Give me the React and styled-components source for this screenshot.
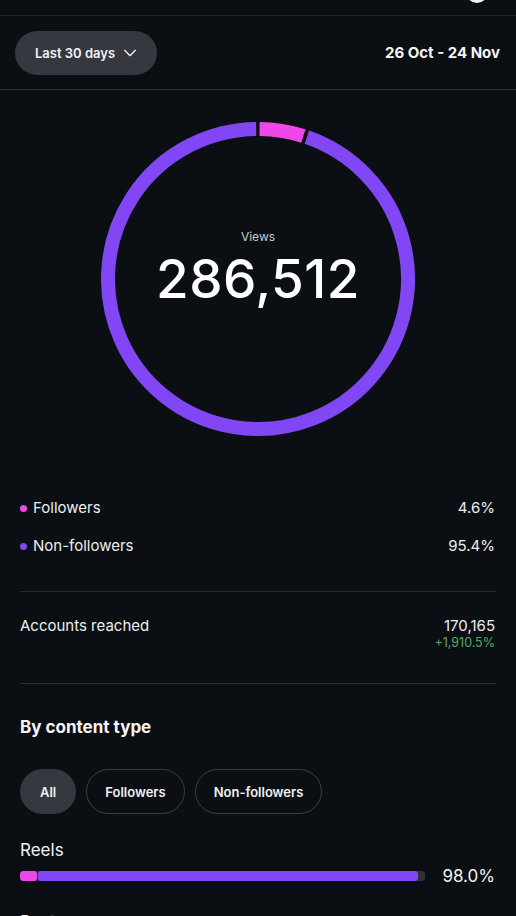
import React from 'react';
import styled, { createGlobalStyle } from 'styled-components';

const GlobalStyle = createGlobalStyle`
  html, body {
    margin: 0;
    padding: 0;
    background: #0b0e13;
  }
  body {
    font-family: Inter, "Noto Sans", "Liberation Sans", sans-serif;
    color: #f5f5f5;
    -webkit-font-smoothing: antialiased;
  }
`;

const Page = styled.div`
  width: 516px;
  height: 916px;
  overflow: hidden;
  background: #0b0e13;
`;

const TopBar = styled.div`
  height: 15px;
  border-bottom: 1px solid #23272d;
  display: flex;
  justify-content: flex-end;
  padding-right: 28px;
  overflow: hidden;
`;

const TopIcon = styled.div`
  width: 22px;
  height: 22px;
  margin-top: -19px;
  border-radius: 50%;
  background: #f2f2f2;
`;

const Header = styled.div`
  height: 73px;
  display: flex;
  align-items: center;
  justify-content: space-between;
  padding: 0 16px 0 15px;
  border-bottom: 1px solid #2a2e34;
`;

const RangeButton = styled.button`
  height: 44px;
  padding: 0 19px 0 20px;
  border: none;
  border-radius: 22px;
  background: #35383e;
  color: #f2f2f2;
  font-family: inherit;
  font-size: 13px;
  font-weight: 600;
  display: flex;
  align-items: center;
  gap: 7px;
`;

const DateRange = styled.div`
  font-size: 15px;
  font-weight: 700;
  color: #f5f5f5;
`;

const RingWrap = styled.div`
  position: relative;
  width: 320px;
  height: 320px;
  margin: 29px auto 0;
`;

const RingCenter = styled.div`
  position: absolute;
  inset: 0;
  display: flex;
  flex-direction: column;
  align-items: center;
  justify-content: center;
  padding-bottom: 23px;
`;

const RingLabel = styled.div`
  font-size: 12px;
  line-height: 15px;
  color: #c9cacc;
  margin-bottom: 8px;
`;

const RingValue = styled.div`
  font-size: 53px;
  font-weight: 500;
  letter-spacing: 0.5px;
  color: #fff;
  line-height: 54px;
`;

const Legend = styled.div`
  padding: 58px 21px 0 20px;
  display: flex;
  flex-direction: column;
  gap: 16px;
`;

const LegendRow = styled.div`
  display: flex;
  align-items: center;
  justify-content: space-between;
  font-size: 15px;
  line-height: 22px;
  color: #eeeeee;
`;

const LegendName = styled.div`
  display: flex;
  align-items: center;
  gap: 6px;
`;

const Dot = styled.span`
  width: 7px;
  height: 7px;
  border-radius: 50%;
  background: ${(p) => p.$color};
`;

const Divider = styled.div`
  height: 1px;
  background: #2a2e34;
  margin: ${(p) => p.$top || 0}px 20px 0 20px;
`;

const StatRow = styled.div`
  display: flex;
  justify-content: space-between;
  align-items: flex-start;
  padding: 24px 21px 33px 20px;
  font-size: 15px;
  color: #eeeeee;
`;

const StatValue = styled.div`
  text-align: right;
  line-height: 20px;
`;

const Change = styled.div`
  font-size: 12.5px;
  line-height: 14px;
  color: #4fae5f;
`;

const SectionTitle = styled.h2`
  margin: 33px 20px 0;
  font-size: 17px;
  font-weight: 700;
  color: #f5f5f5;
`;

const Chips = styled.div`
  display: flex;
  gap: 10px;
  padding: 32px 20px 0;
`;

const Chip = styled.button`
  height: 45px;
  padding: 0 ${(p) => (p.$active ? '19px' : '18px')};
  border-radius: 23px;
  border: 1px solid ${(p) => (p.$active ? '#35383e' : '#3a3d43')};
  background: ${(p) => (p.$active ? '#35383e' : 'transparent')};
  color: #f2f2f2;
  font-family: inherit;
  font-size: 13px;
  font-weight: 600;
`;

const TypeBlock = styled.div`
  padding: 25px 21px 0 20px;
`;

const TypeName = styled.div`
  font-size: 17px;
  color: #f2f2f2;
  line-height: 22px;
`;

const BarRow = styled.div`
  display: flex;
  align-items: center;
  justify-content: space-between;
  margin-top: 5px;
`;

const Track = styled.div`
  width: 405px;
  height: 10px;
  border-radius: 3px;
  background: #2f3237;
  display: flex;
  overflow: hidden;
`;

const Fill = styled.div`
  height: 100%;
  background: ${(p) => p.$color};
  border-radius: 3px;
  margin-right: 1px;
`;

const BarValue = styled.div`
  font-size: 17px;
  color: #f2f2f2;
`;

const Chevron = () => (
  <svg width="16" height="16" viewBox="0 0 24 24" fill="none" stroke="#f2f2f2" strokeWidth="2" strokeLinecap="round" strokeLinejoin="round">
    <path d="M4 8l8 8 8-8" />
  </svg>
);

function arc(cx, cy, r, a0, a1) {
  const rad = (a) => ((a - 90) * Math.PI) / 180;
  const x0 = cx + r * Math.cos(rad(a0));
  const y0 = cy + r * Math.sin(rad(a0));
  const x1 = cx + r * Math.cos(rad(a1));
  const y1 = cy + r * Math.sin(rad(a1));
  const large = a1 - a0 > 180 ? 1 : 0;
  return `M ${x0} ${y0} A ${r} ${r} 0 ${large} 1 ${x1} ${y1}`;
}

const Ring = () => (
  <svg width="320" height="320" viewBox="0 0 320 320">
    <path d={arc(160, 160, 150, 0.6, 17.6)} stroke="#f048e8" strokeWidth="14" fill="none" />
    <path d={arc(160, 160, 150, 19, 359.3)} stroke="#8247f5" strokeWidth="14" fill="none" />
  </svg>
);

export default function App() {
  return (
    <Page>
      <GlobalStyle />
      <TopBar>
        <TopIcon />
      </TopBar>
      <Header>
        <RangeButton>
          Last 30 days <Chevron />
        </RangeButton>
        <DateRange>26 Oct - 24 Nov</DateRange>
      </Header>

      <RingWrap>
        <Ring />
        <RingCenter>
          <RingLabel>Views</RingLabel>
          <RingValue>286,512</RingValue>
        </RingCenter>
      </RingWrap>

      <Legend>
        <LegendRow>
          <LegendName><Dot $color="#f048e8" />Followers</LegendName>
          <span>4.6%</span>
        </LegendRow>
        <LegendRow>
          <LegendName><Dot $color="#8247f5" />Non-followers</LegendName>
          <span>95.4%</span>
        </LegendRow>
      </Legend>

      <Divider $top={34} />
      <StatRow>
        <span>Accounts reached</span>
        <StatValue>
          170,165
          <Change>+1,910.5%</Change>
        </StatValue>
      </StatRow>
      <Divider />

      <SectionTitle>By content type</SectionTitle>
      <Chips>
        <Chip $active>All</Chip>
        <Chip>Followers</Chip>
        <Chip>Non-followers</Chip>
      </Chips>

      <TypeBlock>
        <TypeName>Reels</TypeName>
        <BarRow>
          <Track>
            <Fill $color="#f048e8" style={{ width: '4.2%' }} />
            <Fill $color="#8247f5" style={{ width: '93.8%' }} />
          </Track>
          <BarValue>98.0%</BarValue>
        </BarRow>
      </TypeBlock>
      <TypeBlock>
        <TypeName>Posts</TypeName>
      </TypeBlock>
    </Page>
  );
}
